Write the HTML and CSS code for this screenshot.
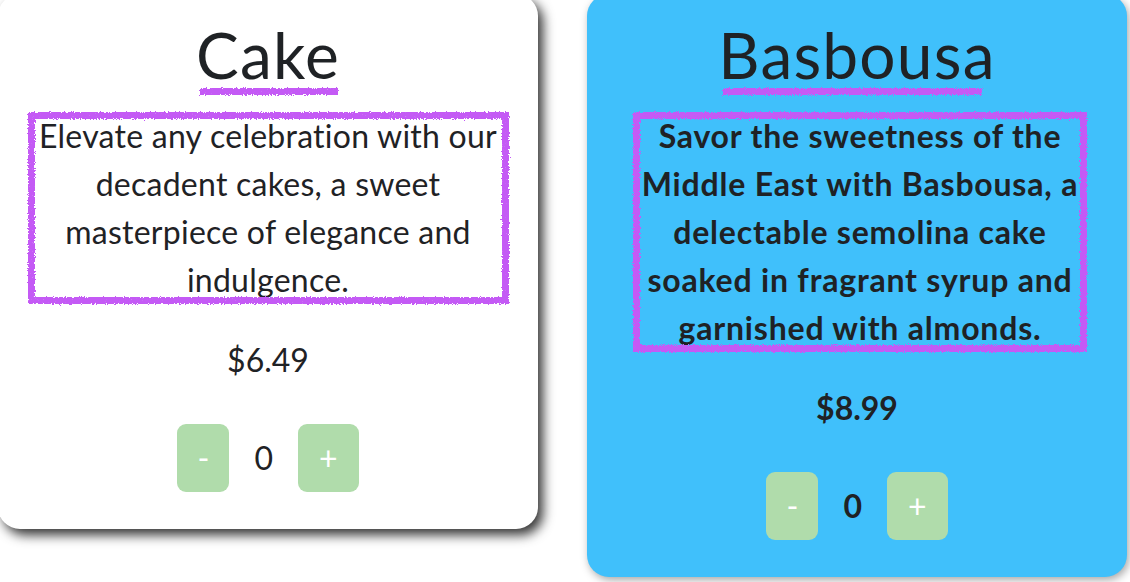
FILE: index.html
```html
<!DOCTYPE html>
<html lang="en">
<head>
<meta charset="utf-8">
<title>Desserts</title>
<link rel="stylesheet" href="styles.css">
</head>
<body>
<main class="menu">
  <article class="card">
    <h1 class="title">Cake</h1>
    <p class="desc">Elevate any celebration with our decadent cakes, a sweet masterpiece of elegance and indulgence.</p>
    <p class="price">$6.49</p>
    <div class="qty">
      <button class="btn">-</button>
      <span class="count">0</span>
      <button class="btn btn--plus">+</button>
    </div>
  </article>
  <article class="card card--active">
    <h1 class="title">Basbousa</h1>
    <p class="desc">Savor the sweetness of the Middle East with Basbousa, a delectable semolina cake soaked in fragrant syrup and garnished with almonds.</p>
    <p class="price">$8.99</p>
    <div class="qty">
      <button class="btn">-</button>
      <span class="count">0</span>
      <button class="btn btn--plus">+</button>
    </div>
  </article>
</main>
<svg class="defs" width="0" height="0" aria-hidden="true">
  <filter id="crayon" x="-10%" y="-10%" width="120%" height="120%">
    <feTurbulence type="fractalNoise" baseFrequency="0.8" numOctaves="3" seed="3" result="noise"/>
    <feDisplacementMap in="SourceGraphic" in2="noise" scale="4" xChannelSelector="R" yChannelSelector="G" result="disp"/>
    <feTurbulence type="fractalNoise" baseFrequency="1.3" numOctaves="1" seed="8" result="grain"/>
    <feColorMatrix in="grain" type="matrix" values="0 0 0 0 0  0 0 0 0 0  0 0 0 0 0  0 0 0 -2.2 2.5" result="mask"/>
    <feComposite in="disp" in2="mask" operator="in"/>
  </filter>
</svg>
</body>
</html>
```

FILE: styles.css
```css
html, body {
  margin: 0;
  padding: 0;
  background: #ffffff;
  height: 100%;
  overflow: hidden;
}

body {
  font-family: Lato, "Noto Sans", sans-serif;
  font-size: 32px;
  color: #1f2225;
}

.defs {
  position: absolute;
  width: 0;
  height: 0;
}

.menu {
  display: flex;
  align-items: flex-start;
  gap: 49px;
  margin: -6px 0 0 -2px;
}

.card {
  width: 540px;
  flex: 0 0 540px;
  box-sizing: border-box;
  padding: 21px 29px 37px;
  background: #ffffff;
  border-radius: 22px;
  box-shadow: 5px 6px 12px rgba(0, 0, 0, 0.8);
  display: flex;
  flex-direction: column;
  align-items: center;
  text-align: center;
}

.card--active {
  background: #40c0fb;
  box-shadow: 2px 3px 9px rgba(0, 0, 0, 0.35);
}

.title {
  position: relative;
  margin: 0 0 17px;
  font-size: 64px;
  font-weight: 400;
  line-height: 80px;
  letter-spacing: 1.2px;
}

.title::after {
  content: "";
  position: absolute;
  left: 4px;
  right: 2px;
  bottom: 0;
  height: 7px;
  background: #c45af5;
  filter: url(#crayon);
}

.card--active .title::after {
  left: 5px;
  right: 14px;
}

.desc {
  position: relative;
  box-sizing: border-box;
  width: 481px;
  margin: 0;
  padding: 0;
  line-height: 48px;
  letter-spacing: 0.25px;
}

.desc::before {
  content: "";
  position: absolute;
  inset: 0;
  border: 7px solid #c45af5;
  filter: url(#crayon);
  pointer-events: none;
}

.card--active .desc {
  width: 454px;
  margin-left: 6px;
  font-weight: 700;
  letter-spacing: 0.8px;
}

.price {
  margin: 32px 0 40px;
  line-height: 48px;
}

.card--active .price,
.card--active .count {
  font-weight: 700;
}

.qty {
  display: flex;
  align-items: center;
}

.btn {
  font-family: inherit;
  font-size: 32px;
  line-height: 48px;
  padding: 10px 20px;
  border: none;
  border-radius: 9px;
  background: #b0dcab;
  color: #ffffff;
}

.btn--plus {
  padding: 10px 21px;
}

.count {
  margin: 0 25px;
  line-height: 48px;
}
```
